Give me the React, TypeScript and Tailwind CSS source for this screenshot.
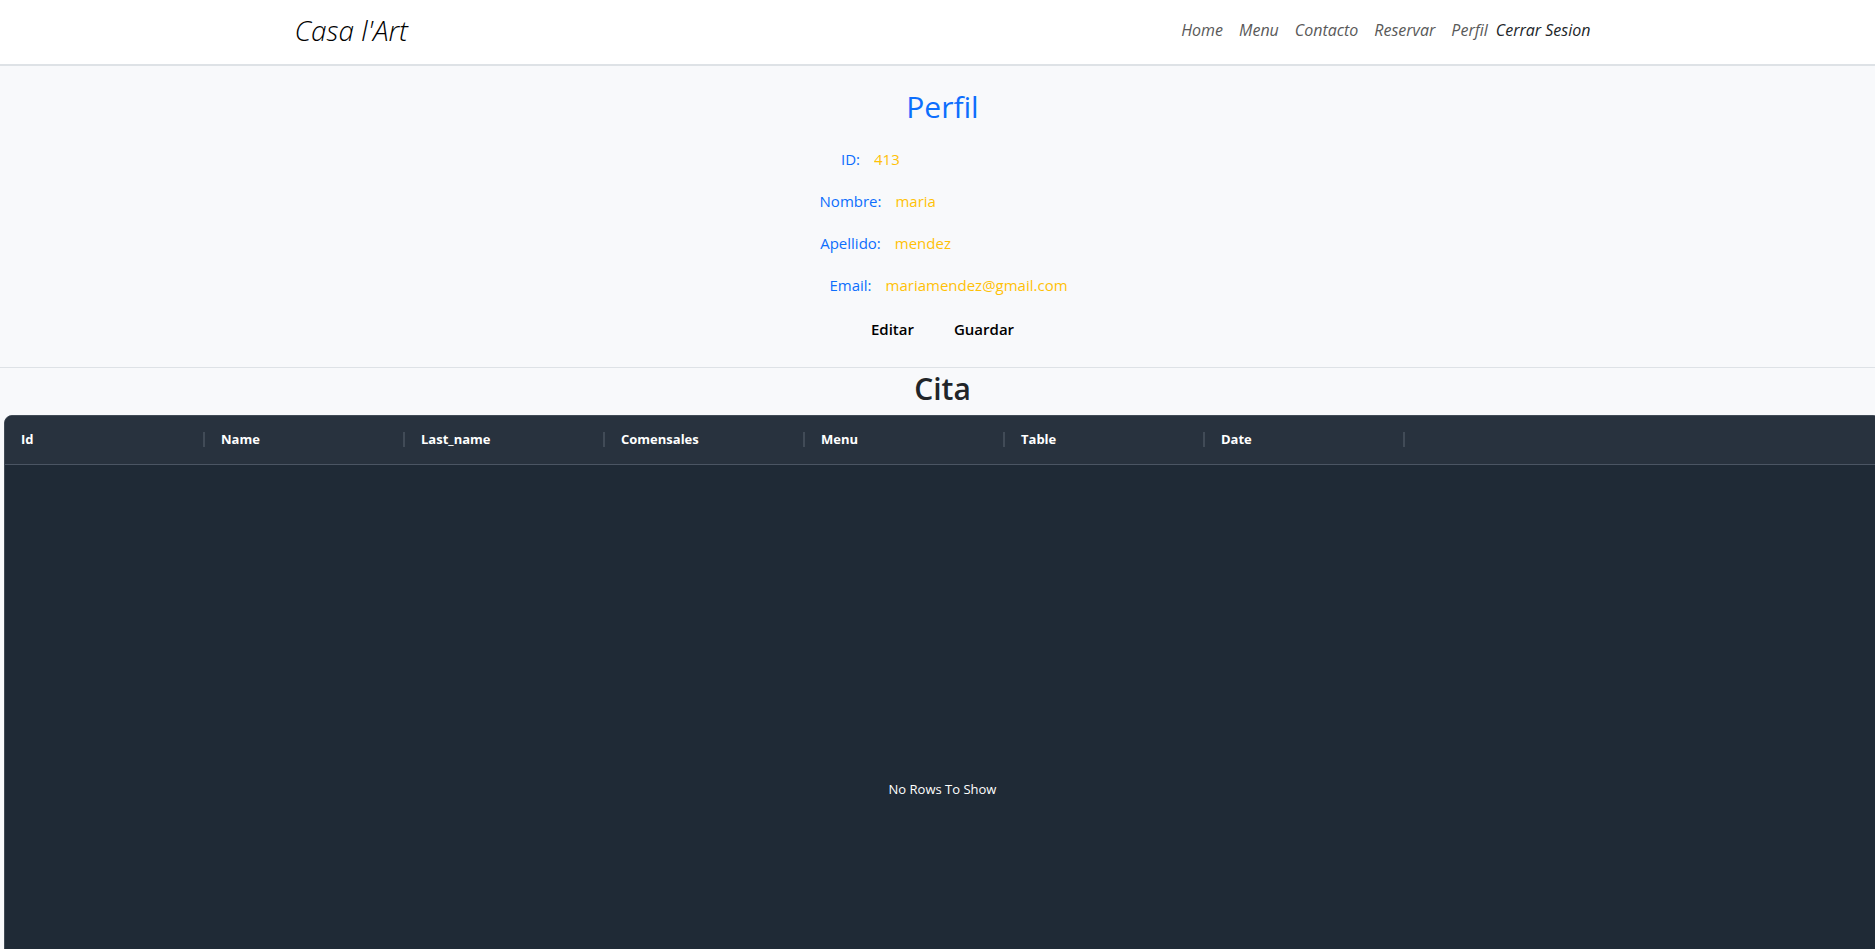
import React from "react";

const links = ["Home", "Menu", "Contacto", "Reservar", "Perfil"];

const fields = [
  { id: "id", label: "ID:", value: "413" },
  { id: "nombre", label: "Nombre:", value: "maria" },
  { id: "apellido", label: "Apellido:", value: "mendez" },
  { id: "email", label: "Email:", value: "mariamendez@gmail.com" },
];

const columns = ["Id", "Name", "Last_name", "Comensales", "Menu", "Table", "Date"];

function Navbar() {
  return (
    <header className="border-b-2 border-[#dee2e6] bg-white">
      <div className="mx-auto flex h-16 max-w-[1320px] items-center justify-between px-3 pb-1 italic">
        <a href="#" className="text-[28px] font-light text-black">
          Casa l'Art
        </a>
        <nav className="flex items-center gap-2 text-base">
          <ul className="flex gap-4 text-[#595959]">
            {links.map((link) => (
              <li key={link}>
                <a href="#">{link}</a>
              </li>
            ))}
          </ul>
          <button type="button" className="italic text-[#212529]">
            Cerrar Sesion
          </button>
        </nav>
      </div>
    </header>
  );
}

function Profile() {
  return (
    <form
      className="flex flex-col items-center border-b border-[#dee2e6] pt-6 pb-[26px]"
      onSubmit={(e) => e.preventDefault()}
    >
      <h1 className="text-[30px] leading-[34px] text-[#0d6efd]">Perfil</h1>
      <div className="mt-[23px] flex flex-col items-center gap-[18px] text-[15px] leading-6">
        {fields.map((field) => (
          <div key={field.id} className="flex gap-[14px] pl-3">
            <label htmlFor={field.id} className="text-[#0d6efd]">
              {field.label}
            </label>
            <input
              id={field.id}
              defaultValue={field.value}
              className="w-[182px] bg-transparent text-[#ffc107] outline-none"
            />
          </div>
        ))}
      </div>
      <div className="mt-5 flex gap-10 text-[15px] leading-6 font-semibold text-black">
        <button type="button">Editar</button>
        <button type="submit">Guardar</button>
      </div>
    </form>
  );
}

function Appointments() {
  return (
    <section className="px-1">
      <h2 className="pt-px pb-[7px] text-center text-[30px] leading-[39px] font-semibold text-[#212529]">
        Cita
      </h2>
      <div className="overflow-hidden rounded-lg border border-[#414b56] bg-[#1f2a36] text-[13px] text-white">
        <table className="w-full table-fixed border-collapse">
          <thead>
            <tr className="h-[48px] border-b border-[#4b5563] bg-[#28323e]">
              {columns.map((column) => (
                <th key={column} scope="col" className="w-[200px] p-0 text-left font-bold">
                  <div className="flex items-center justify-between pl-4">
                    {column}
                    <span className="h-[15px] w-0.5 bg-[#414b57]" />
                  </div>
                </th>
              ))}
              <td />
            </tr>
          </thead>
          <tbody>
            <tr>
              <td colSpan={8} className="h-[650px] text-center align-middle">
                No Rows To Show
              </td>
            </tr>
          </tbody>
        </table>
      </div>
    </section>
  );
}

export default function App() {
  return (
    <div className="h-screen overflow-hidden bg-[#f8f9fb] font-['Open_Sans','Noto_Sans',sans-serif]">
      <div className="-mr-2.5">
        <Navbar />
        <main>
          <Profile />
          <Appointments />
        </main>
      </div>
    </div>
  );
}
